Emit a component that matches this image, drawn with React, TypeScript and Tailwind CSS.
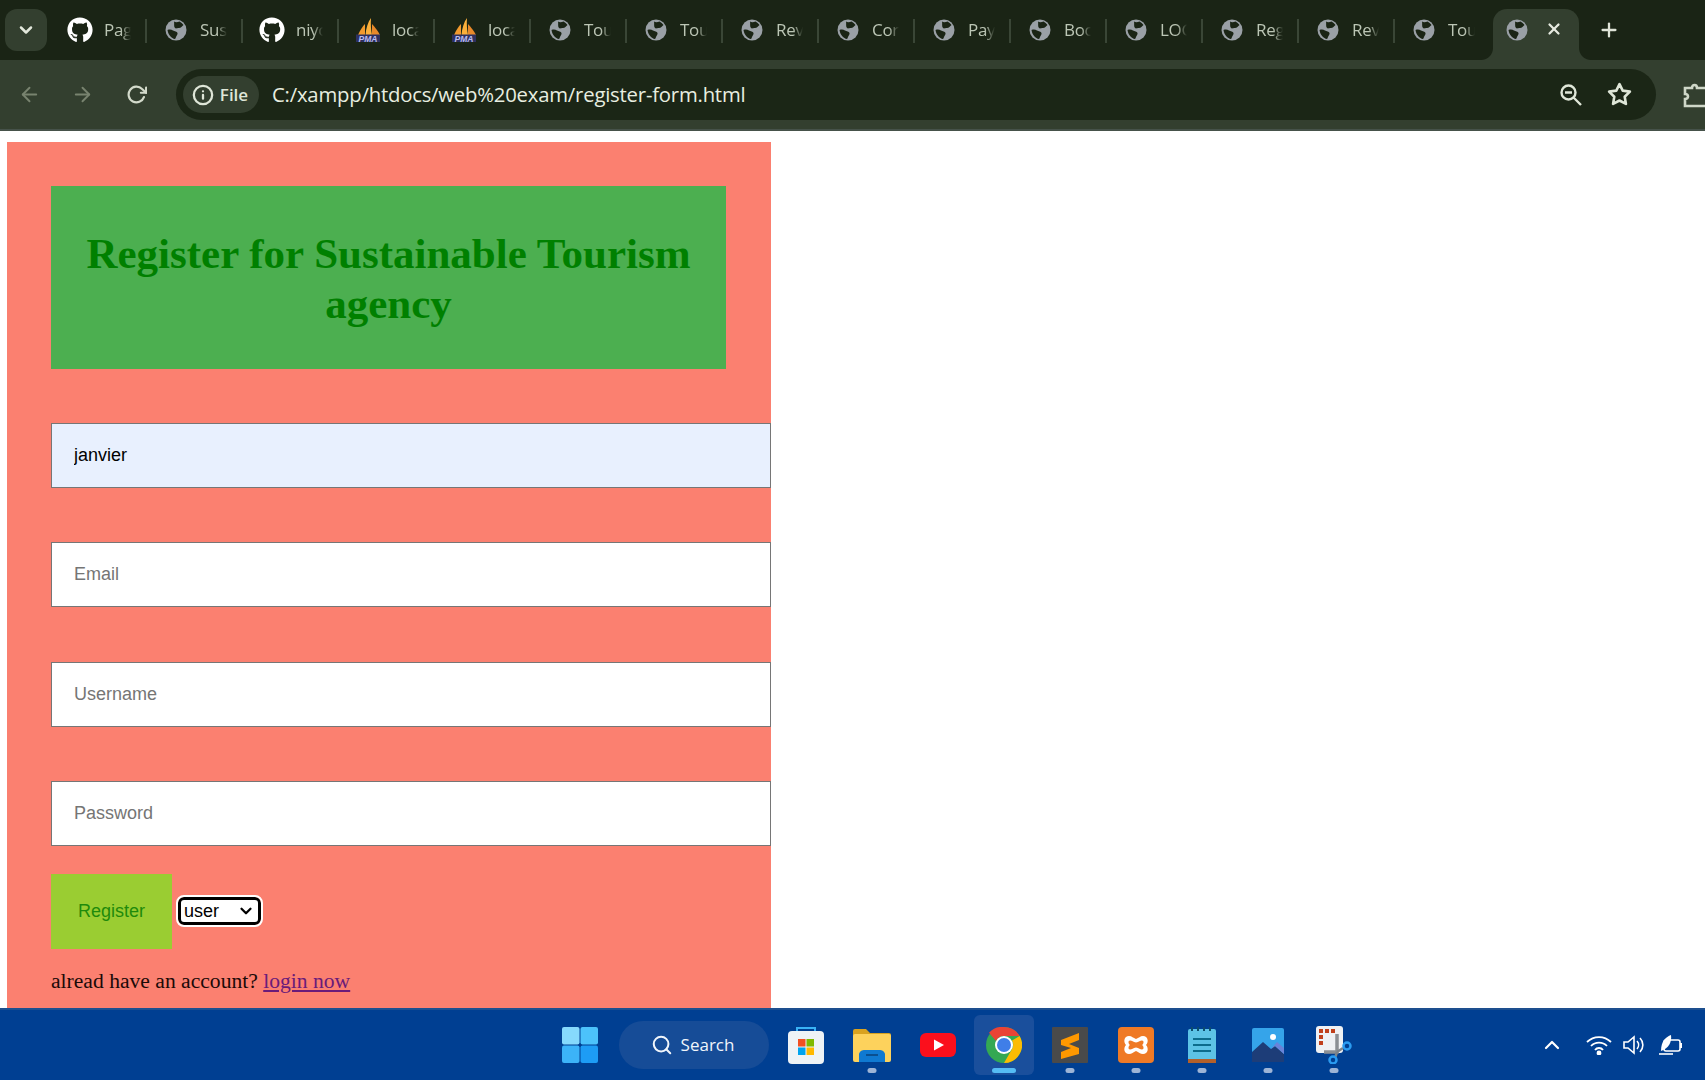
import React from "react";
import { FaGithub } from "react-icons/fa";
import { FiArrowLeft, FiArrowRight, FiRotateCw, FiStar, FiInfo, FiX, FiPlus, FiChevronDown, FiChevronUp, FiSearch } from "react-icons/fi";

const segoe = { fontFamily: '"Open Sans", "Noto Sans", sans-serif' };

const Globe = () => (
  <svg width="22" height="22" viewBox="0 0 22 22" className="shrink-0">
    <circle cx="11" cy="11" r="10.5" fill="#9aa0a6" />
    <path d="M9 2.500c1.500 1.200 4 .6 5.500 0 1.500 1 3 2 4 3.500-1.500 1-2.500 3-4.500 3-2 0-3 1-4 0-1.500-1.400-.5-4.600-1-6.500z" fill="#1a2415" />
    <path d="M2.500 11c2-.8 4-.5 5.500.5 1.500 1 4 .8 4.500 2.500.4 1.600-1 2.500-1.500 4-.3 1-.5 1.600-1 2-3.500-.6-6.500-3.500-7.500-9z" fill="#1a2415" />
  </svg>
);

const Pma = () => (
  <svg width="26" height="26" viewBox="0 0 26 26" className="shrink-0">
    <path d="M3 18 C5 13 8 9 10 7 L10 18z" fill="#f29a2e" />
    <path d="M10.500 18 C11 11 13 5 16 1 C15.500 7 16 13 17 18z" fill="#fbb03b" />
    <path d="M17 18 L17 7 C20 10 23 14 25 18z" fill="#e8892a" />
    <rect x="1" y="17.500" width="24" height="7.500" fill="#2d3060" />
    <text x="13" y="24.500" textAnchor="middle" fontSize="8.500" fontWeight="700" fontStyle="italic" fill="#b9bdf0" fontFamily='"Liberation Sans", sans-serif'>PMA</text>
  </svg>
);

const tabs = [
  { t: "Pag", i: "gh" },
  { t: "Sus", i: "globe" },
  { t: "niyo", i: "gh" },
  { t: "loca", i: "pma" },
  { t: "loca", i: "pma" },
  { t: "Tou", i: "globe" },
  { t: "Tou", i: "globe" },
  { t: "Rev", i: "globe" },
  { t: "Cor", i: "globe" },
  { t: "Pay", i: "globe" },
  { t: "Boc", i: "globe" },
  { t: "LOG", i: "globe" },
  { t: "Reg", i: "globe" },
  { t: "Rev", i: "globe" },
  { t: "Tou", i: "globe" },
];

function TabStrip() {
  return (
    <div className="h-[60px] bg-[#1a2415] flex items-start pl-[5px] shrink-0">
      <div className="w-[42px] h-[42px] mt-[9px] rounded-[12px] bg-[#333f2f] flex items-center justify-center text-[#e3e8dc] shrink-0">
        <FiChevronDown size={20} strokeWidth={3} />
      </div>
      <div className="flex ml-[4px] h-[42px] mt-[9px]">
        {tabs.map((tab, n) => (
          <div key={n} className="w-[96px] h-[42px] flex items-center pl-[16px] relative shrink-0">
            <div className="w-[26px] flex justify-center shrink-0">
              {tab.i === "gh" && <FaGithub size={26} className="text-white" />}
              {tab.i === "globe" && <Globe />}
              {tab.i === "pma" && <Pma />}
            </div>
            <span style={segoe} className="ml-[11px] whitespace-nowrap text-[17px] tracking-[-0.3px] text-[#bcc6b5] [mask-image:linear-gradient(to_right,black_17px,transparent_27px)]">{tab.t}</span>
            {n < tabs.length - 1 && <div className="absolute right-0 top-[10px] w-[2px] h-[24px] bg-[#3a4636]" />}
          </div>
        ))}
      </div>
      <div className="relative w-[86px] h-[51px] mt-[9px] ml-[2px] rounded-t-[14px] bg-[#333f2f] flex items-start pl-[13px] pt-[10px] shrink-0">
        <Globe />
        <FiX size={18} strokeWidth={3} className="ml-[17px] mt-[1px] text-[#e6eae0]" />
        <span className="absolute bottom-0 -left-[12px] w-[12px] h-[12px] bg-[radial-gradient(circle_at_0_0,#1a2415_11.5px,#333f2f_12.5px)]" />
        <span className="absolute bottom-0 -right-[12px] w-[12px] h-[12px] bg-[radial-gradient(circle_at_100%_0,#1a2415_11.5px,#333f2f_12.5px)]" />
      </div>
      <FiPlus size={22} strokeWidth={2.500} className="mt-[19px] ml-[19px] text-[#dfe4d8]" />
    </div>
  );
}

function Toolbar() {
  return (
    <div className="h-[71px] bg-[#333f2f] border-b-2 border-[#46524a] flex items-start pt-[9px] shrink-0 overflow-hidden">
      <div className="flex items-center h-[51px] pl-[18px] text-[#78836f]">
        <FiArrowLeft size={23} />
        <FiArrowRight size={23} className="ml-[30px]" />
        <FiRotateCw size={21} strokeWidth={2.500} className="ml-[32px] text-[#d3dacb]" />
      </div>
      <div className="ml-[29px] w-[1480px] h-[51px] rounded-full bg-[#1b2616] flex items-center pl-[7px] shrink-0">
        <div style={segoe} className="h-[37px] w-[76px] rounded-full bg-[#333f2f] flex items-center justify-center gap-[6px] pr-[2px] text-[#dfe6d8] text-[17px] font-semibold">
          <FiInfo size={22} strokeWidth={2.500} />
          <span>File</span>
        </div>
        <span style={segoe} className="ml-[13px] text-[20.3px] tracking-[-0.2px] text-[#e8eee0]">C:/xampp/htdocs/web%20exam/register-form.html</span>
        <div className="ml-auto flex items-center pr-[24px] text-[#dfe6d8]">
          <svg width="24" height="24" viewBox="0 0 24 24" fill="none" stroke="currentColor" strokeWidth="2.400">
            <circle cx="9.500" cy="9.500" r="7" />
            <path d="M14.500 14.500L22 22M6 9.500h7" />
          </svg>
          <FiStar size={25} strokeWidth={2.500} className="ml-[24px]" />
        </div>
      </div>
      <svg width="30" height="26" viewBox="0 0 30 26" className="ml-[27px] mt-[13px] shrink-0" fill="none" stroke="#cfd7c8" strokeWidth="2.600">
        <path d="M2 6h7c0-4 5-4 5 0h14v18H2v-7c4 0 4-5 0-5z" />
      </svg>
    </div>
  );
}

function Field({ placeholder, value }: { placeholder: string; value?: string }) {
  return (
    <input
      readOnly
      placeholder={placeholder}
      value={value ?? ""}
      style={{ fontFamily: '"Liberation Sans", sans-serif' }}
      className={`block w-[720px] h-[65px] px-[22px] text-[18px] text-black placeholder:text-[#757575] border border-[#767676] outline-none ${value ? "bg-[#e8f0fe]" : "bg-white"}`}
    />
  );
}

function Page() {
  return (
    <div className="flex-1 bg-white overflow-hidden pl-[7px] pt-[11px]">
      <div className="w-[764px] h-[900px] bg-[#fb8070] pl-[44px] pt-[44px]">
        <div className="w-[675px] h-[183px] bg-[#4caf50] pt-[43px] text-center" style={{ fontFamily: '"Liberation Serif", serif' }}>
          <h1 className="text-[43px] leading-[50px] font-bold text-[#008000] px-[20px]">Register for Sustainable Tourism agency</h1>
        </div>
        <div className="mt-[54px] flex flex-col gap-[54.3px]">
          <Field placeholder="Name" value="janvier" />
          <Field placeholder="Email" />
          <Field placeholder="Username" />
          <Field placeholder="Password" />
        </div>
        <div className="flex items-center mt-[28px]">
          <div style={{ fontFamily: '"Liberation Sans", sans-serif' }} className="w-[121px] h-[75px] bg-[#9acd32] text-[#1f8a0b] text-[18px] flex items-center justify-center">Register</div>
          <div style={{ fontFamily: '"Liberation Sans", sans-serif' }} className="ml-[6px] w-[83px] h-[28px] border-[3px] border-black rounded-[6px] bg-white outline-2 outline-white flex items-center justify-between pl-[3px] pr-[3px] text-[18px] text-black">
            <span>user</span>
            <FiChevronDown size={18} strokeWidth={3} />
          </div>
        </div>
        <p className="mt-[16px] text-[21.6px] text-[#1a0a08]" style={{ fontFamily: '"Liberation Serif", serif' }}>
          alread have an account? <a className="text-[#6a1b7a] underline">login now</a>
        </p>
      </div>
    </div>
  );
}

const Dot = ({ active }: { active?: boolean }) => (
  <div className={`absolute bottom-[2px] left-1/2 -translate-x-1/2 h-[5px] rounded-full ${active ? "w-[24px] bg-[#55bcf5]" : "w-[9px] bg-[#9db4d6]"}`} />
);

function TaskIcon({ children, dot, active }: { children: React.ReactNode; dot?: boolean; active?: boolean }) {
  return (
    <div className={`relative w-[60px] h-[60px] flex items-center justify-center rounded-[6px] shrink-0 ${active ? "bg-[#1a4f9c]" : ""}`}>
      {children}
      {dot && <Dot active={active} />}
    </div>
  );
}

function Taskbar() {
  return (
    <div className="h-[72px] bg-[#003f92] border-t-2 border-[#1d4f8f] flex items-center shrink-0 relative">
      <div className="flex items-center ml-[562px]">
        <svg width="36" height="36" viewBox="0 0 36 36">
          <rect x="0" y="0" width="17.500" height="17.500" rx="2" fill="#86d9fc" />
          <rect x="18.500" y="0" width="17.500" height="17.500" rx="2" fill="#4cc2fb" />
          <rect x="0" y="18.500" width="17.500" height="17.500" rx="2" fill="#3cb3f8" />
          <rect x="18.500" y="18.500" width="17.500" height="17.500" rx="2" fill="#1d9cf5" />
        </svg>
        <div style={segoe} className="ml-[21px] w-[150px] h-[48px] rounded-full bg-[#164c97] flex items-center justify-center gap-[8px] pr-[3px] text-[#f0f5fb] text-[17px]">
          <FiSearch size={22} strokeWidth={2.200} />
          <span>Search</span>
        </div>
        <div className="flex items-center ml-[7px] gap-[6px]">
          <TaskIcon>
            <svg width="36" height="38" viewBox="0 0 36 38">
              <path d="M9 8V2h18v6" fill="none" stroke="#39b2f5" strokeWidth="2" />
              <rect x="0" y="5" width="36" height="33" rx="4" fill="#eef3f6" />
              <rect x="10" y="13" width="7.500" height="7.500" fill="#f25022" />
              <rect x="18.500" y="13" width="7.500" height="7.500" fill="#7fba00" />
              <rect x="10" y="21.500" width="7.500" height="7.500" fill="#00a4ef" />
              <rect x="18.500" y="21.500" width="7.500" height="7.500" fill="#ffb900" />
            </svg>
          </TaskIcon>
          <TaskIcon dot>
            <svg width="38" height="34" viewBox="0 0 38 34">
              <path d="M0 3a2 2 0 0 1 2-2h11l4 4h19a2 2 0 0 1 2 2v4H0z" fill="#d9a21f" />
              <rect x="0" y="6" width="38" height="28" rx="2" fill="#fdd25c" />
              <path d="M6 34v-6a5 5 0 0 1 5-6h16a5 5 0 0 1 5 6v6z" fill="#0f79d1" />
              <rect x="13" y="26" width="12" height="2" fill="#0a4f90" />
            </svg>
          </TaskIcon>
          <TaskIcon>
            <svg width="36" height="24" viewBox="0 0 36 24">
              <rect width="36" height="24" rx="6" fill="#fb0f1c" />
              <path d="M14 6.500v11L24 12z" fill="#fff" />
            </svg>
          </TaskIcon>
          <TaskIcon dot active>
            <svg width="36" height="36" viewBox="0 0 36 36">
              <circle cx="18" cy="18" r="18" fill="#34a853" />
              <path d="M18 0a18 18 0 0 1 15.600 9H18a9 9 0 0 0-8 4.900L3 5.700A18 18 0 0 1 18 0z" fill="#ea4335" />
              <path d="M33.600 9A18 18 0 0 1 18 36l7.800-13.500A9 9 0 0 0 26 13.500z" fill="#fbbc04" />
              <circle cx="18" cy="18" r="9" fill="#fff" />
              <circle cx="18" cy="18" r="7" fill="#3f7ee8" />
            </svg>
          </TaskIcon>
          <TaskIcon dot>
            <svg width="36" height="36" viewBox="0 0 36 36">
              <rect width="36" height="36" rx="1" fill="#4a4a4a" />
              <path d="M9 13 L27 6 V13 L17 17 L27 21 V27 L9 32 V25 L19 21 L9 18z" fill="#ff9800" />
            </svg>
          </TaskIcon>
          <TaskIcon dot>
            <svg width="36" height="36" viewBox="0 0 36 36">
              <rect width="36" height="36" rx="4" fill="#ef7a26" />
              <path d="M11 9c3 0 4 2 7 3 3-1 4-3 7-3 5 0 6 6 3 9 3 3 2 9-3 9-3 0-4-2-7-3-3 1-4 3-7 3-5 0-6-6-3-9-3-3-2-9 3-9z" fill="#fff" />
              <path d="M12 13.500c2 0 3 1.500 6 2 3-.5 4-2 6-2s2 3 0 4.500c2 1.500 2 4.500 0 4.500s-3-1.500-6-2c-3 .5-4 2-6 2s-2-3 0-4.500c-2-1.500-2-4.500 0-4.500z" fill="#ef7a26" />
            </svg>
          </TaskIcon>
          <TaskIcon dot>
            <svg width="28" height="36" viewBox="0 0 28 36">
              <rect y="2" width="28" height="34" rx="2" fill="#5dc3e6" />
              <rect y="32" width="28" height="4" fill="#b3602a" />
              <path d="M5 12h18M5 18h18M5 24h18" stroke="#0d6c8c" strokeWidth="2" />
              <path d="M4 0v4M10 0v4M16 0v4M22 0v4" stroke="#0d4c6c" strokeWidth="2" />
            </svg>
          </TaskIcon>
          <TaskIcon dot>
            <svg width="32" height="34" viewBox="0 0 32 34">
              <rect width="32" height="34" rx="2" fill="#35a4ea" />
              <circle cx="21" cy="9" r="3" fill="#fff" />
              <path d="M0 24l11-10 8 7 4-3 9 8v8H0z" fill="#1d3d78" />
              <path d="M19 21l4-3 9 8v-6l-7-6z" fill="#6a83d8" />
            </svg>
          </TaskIcon>
          <TaskIcon dot>
            <svg width="36" height="38" viewBox="0 0 36 38">
              <rect width="27" height="27" rx="3" fill="#eef1f4" />
              <path d="M3 3h4v4H3zM9 3h4v4H9zM15 3h4v4h-4zM3 9h4v4H3zM3 15h4v4H3z" fill="#c0401c" />
              <path d="M21 8v18H8" fill="none" stroke="#8a8f94" strokeWidth="3.500" />
              <path d="M21 26l6-4M21 26l-2 6" stroke="#7d8388" strokeWidth="2.500" />
              <circle cx="31" cy="20" r="3.500" fill="none" stroke="#2a9bf0" strokeWidth="2.500" />
              <circle cx="17" cy="34" r="3.500" fill="none" stroke="#2a9bf0" strokeWidth="2.500" />
            </svg>
          </TaskIcon>
        </div>
      </div>
      <div className="absolute top-0 bottom-0 left-[1540px] flex items-center text-white">
        <FiChevronUp size={24} strokeWidth={2.200} />
        <svg width="26" height="20" viewBox="0 0 26 20" className="ml-[22px]" fill="none" stroke="#fff" strokeWidth="1.800">
          <path d="M1 7a17 17 0 0 1 24 0M5 11a11 11 0 0 1 16 0M9 15a5 5 0 0 1 8 0" />
          <circle cx="13" cy="18" r="1.500" fill="#fff" />
        </svg>
        <svg width="24" height="22" viewBox="0 0 24 22" className="ml-[10px]" fill="none" stroke="#fff" strokeWidth="1.600">
          <path d="M2 8h4l6-5v16l-6-5H2z" />
          <path d="M15 7a6 6 0 0 1 0 8M18 4a10 10 0 0 1 0 14" />
        </svg>
        <svg width="26" height="24" viewBox="0 0 26 24" className="ml-[12px]" fill="none" stroke="#fff" strokeWidth="1.600">
          <rect x="6" y="7" width="16" height="11" rx="2" />
          <path d="M23 10v5" strokeWidth="2" />
          <path d="M3 18C3 8 8 4 13 2c1 7-2 13-10 16z" fill="#fff" stroke="none" />
          <path d="M1 21h14" />
        </svg>
      </div>
    </div>
  );
}

export default function App() {
  return (
    <div className="w-[1705px] h-[1080px] flex flex-col overflow-hidden">
      <TabStrip />
      <Toolbar />
      <Page />
      <Taskbar />
    </div>
  );
}
